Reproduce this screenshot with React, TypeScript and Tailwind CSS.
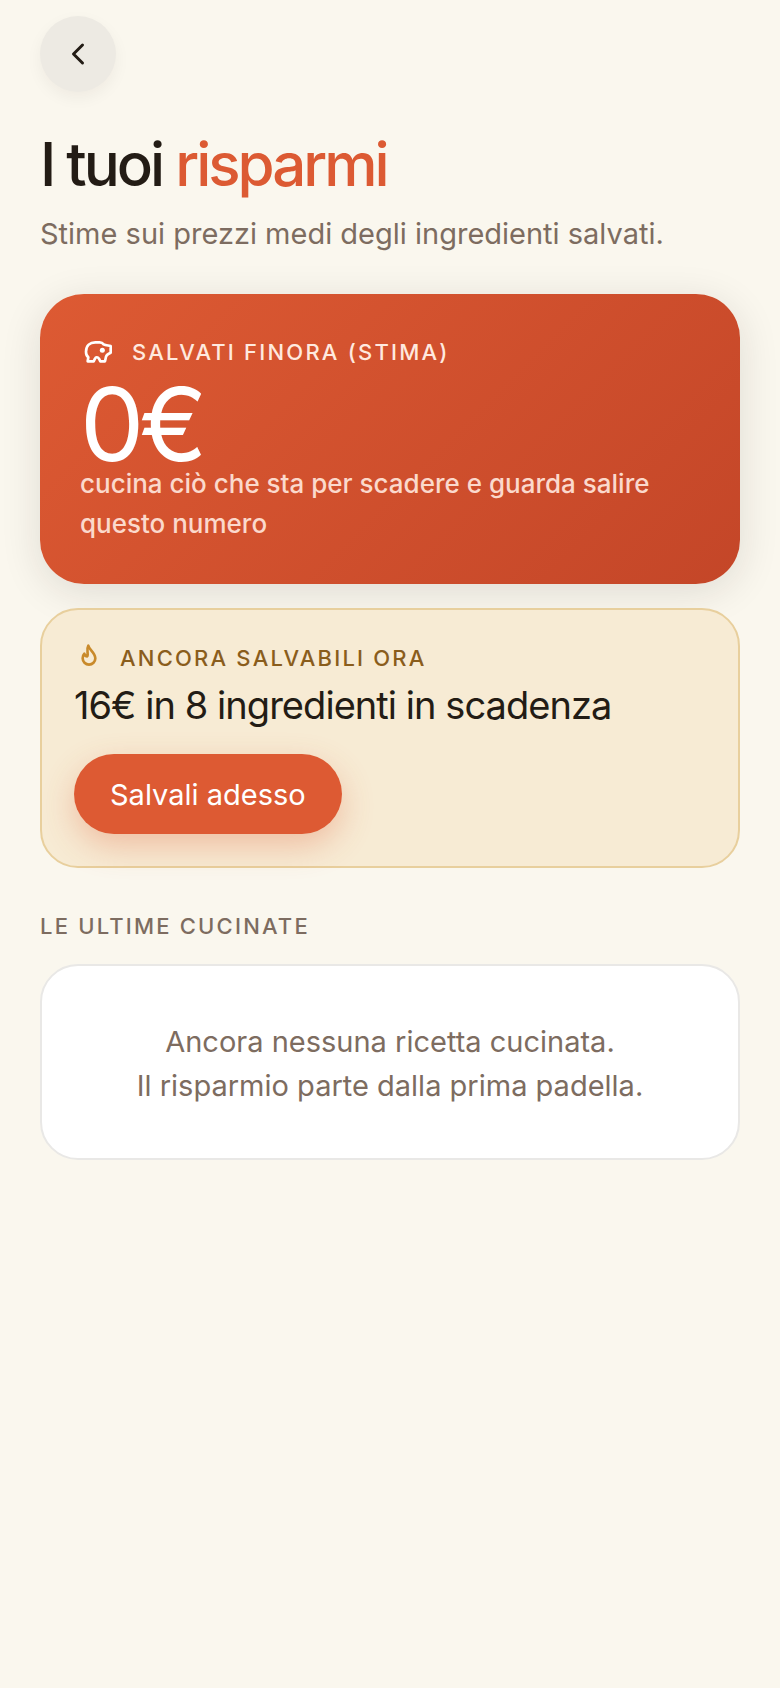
import { ChevronLeft } from "lucide-react";

function PigIcon() {
  return (
    <svg
      viewBox="60 42 108 108"
      className="size-9"
      aria-hidden="true"
      fill="none"
      stroke="white"
      strokeWidth="8"
      strokeLinecap="round"
      strokeLinejoin="round"
    >
      <path d="M78 95C78 77 90 67 106 67H119C124 67 128 69 131 73C137 77 145 76 152 78V98C147 100 140 104 138 110L135 124H121L117 116C113 110 107 111 105 116L101 124H83L85 112C80 108 78 102 78 95Z" />
      <circle cx="127" cy="91" r="7.5" fill="white" stroke="none" />
    </svg>
  );
}

function FlameIcon() {
  return (
    <svg
      viewBox="0 0 90 96"
      className="h-8 w-[30px] text-[#c98a2b]"
      aria-hidden="true"
      fill="none"
      stroke="currentColor"
      strokeWidth="8"
      strokeLinecap="round"
      strokeLinejoin="round"
    >
      <path d="M43 11C45 23 64 32 64 49A19 19 0 0 1 26 49C26 43 28 38 31 35C32 40 35 43 40 43C44 34 36 24 43 11Z" />
    </svg>
  );
}

export default function App() {
  return (
    <main className="min-h-screen bg-[#faf7ee] px-10 pt-4 pb-10 font-['Inter','Liberation_Sans',sans-serif] text-[#231c15]">
      <button
        type="button"
        aria-label="Indietro"
        className="flex size-19 items-center justify-center rounded-full bg-[#edeae3] shadow-[0_6px_16px_rgba(35,28,21,0.05)]"
      >
        <ChevronLeft className="size-9" />
      </button>

      <h1 className="mt-[34px] text-[60px] leading-[76px] font-medium tracking-tighter">
        I tuoi <span className="text-[#dc5a33]">risparmi</span>
      </h1>
      <p className="mt-[10px] text-[29px] leading-[44px] text-[#7d6c60]">
        Stime sui prezzi medi degli ingredienti salvati.
      </p>

      <section className="mt-[38px] rounded-[44px] bg-linear-135 from-[#dd5a33] to-[#c44628] p-10 text-white shadow-[0_8px_40px_rgba(35,28,21,0.12)]">
        <h2 className="flex items-center gap-4 text-[22px] leading-9 font-medium tracking-widest text-[#ffe9df]">
          <PigIcon />
          SALVATI FINORA (STIMA)
        </h2>
        <p className="pt-[14px] text-[102px] leading-[80px] tracking-tighter">0€</p>
        <p className="text-[26px] leading-10 font-medium text-[#fbd9cc]">
          cucina ciò che sta per scadere e guarda salire questo numero
        </p>
      </section>

      <section className="mt-6 rounded-[38px] border-2 border-[#e8cf9d] bg-[#f7ebd4] px-8 py-8">
        <h2 className="flex items-center gap-4 text-[22px] leading-8 font-medium tracking-widest text-[#8a5d1c]">
          <FlameIcon />
          ANCORA SALVABILI ORA
        </h2>
        <p className="text-[38px] leading-[62px] tracking-tight">16€ in 8 ingredienti in scadenza</p>
        <button
          type="button"
          className="mt-[18px] h-20 rounded-full bg-[#dd5a33] px-9 pt-0.5 text-[29px] text-white shadow-[0_12px_32px_rgba(221,90,51,0.3)]"
        >
          Salvali adesso
        </button>
      </section>

      <h2 className="mt-10 text-[22px] leading-9 font-medium tracking-widest text-[#7d6c60]">
        LE ULTIME CUCINATE
      </h2>
      <section className="mt-5 rounded-[38px] border-2 border-[#e9e8e6] bg-white px-8 pt-[54px] pb-[50px] text-center text-[29px] leading-11 text-[#7d6c60]">
        <p>Ancora nessuna ricetta cucinata.</p>
        <p>Il risparmio parte dalla prima padella.</p>
      </section>
    </main>
  );
}
